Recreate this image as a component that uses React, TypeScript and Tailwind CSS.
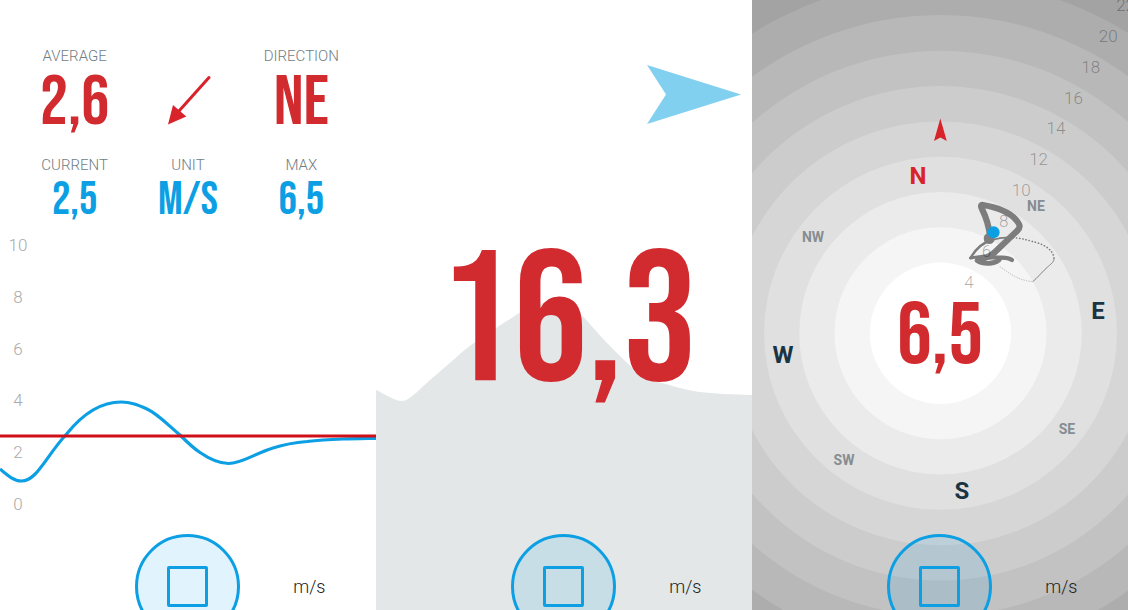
const DISPLAY = "font-['Bebas_Neue','Roboto_Condensed','Liberation_Sans_Narrow','Roboto',sans-serif]";

function Footer() {
  return (
    <footer className="relative grid h-[76px] shrink-0 grid-cols-3 overflow-hidden px-[18px]">
      <button
        type="button"
        aria-label="Stop"
        className="col-start-2 flex size-[105px] items-center justify-center justify-self-center rounded-full border-3 border-[#0c9fe3] bg-[#0c9fe3]/12"
      >
        <span className="size-[41px] rounded-xs border-3 border-[#0c9fe3]" />
      </button>
      <span className="mt-[41px] pl-4 text-center text-lg leading-6 font-light text-[#222]">m/s</span>
    </footer>
  );
}

function Label({ children }: { children: string }) {
  return <dt className="text-[15px] leading-5 font-light text-[#717d82]">{children}</dt>;
}

function Big({ children }: { children: string }) {
  return <dd className={`${DISPLAY} text-[70px] leading-[74px] text-[#d12b2f]`}>{children}</dd>;
}

function Small({ children }: { children: string }) {
  return <dd className={`${DISPLAY} text-[46px] leading-[52px] text-[#0c9fe3]`}>{children}</dd>;
}

function HistoryPanel() {
  return (
    <section className="flex flex-col overflow-hidden bg-white">
      <dl className="grid grid-cols-3 gap-y-[15px] px-[18px] pt-[46px] text-center">
        <div>
          <Label>AVERAGE</Label>
          <Big>2,6</Big>
        </div>
        <div className="flex items-end justify-center pb-[15px]">
          <svg width="46" height="50" viewBox="0 0 46 50" aria-hidden="true">
            <path d="M44 2.500 14 36" stroke="#d8232a" strokeWidth="3" strokeLinecap="round" />
            <path d="M3 49.500 8 30 21.300 41.500Z" fill="#d8232a" />
          </svg>
        </div>
        <div>
          <Label>DIRECTION</Label>
          <Big>NE</Big>
        </div>
        <div>
          <Label>CURRENT</Label>
          <Small>2,5</Small>
        </div>
        <div>
          <Label>UNIT</Label>
          <Small>M/S</Small>
        </div>
        <div>
          <Label>MAX</Label>
          <Small>6,5</Small>
        </div>
      </dl>
      <div className="relative mt-[9px] mb-[21px] flex flex-1 flex-col justify-between">
        {["10", "8", "6", "4", "2", "0"].map((n) => (
          <span key={n} className="w-9 text-center text-[17px] leading-[18px] font-light text-[#aaa]">
            {n}
          </span>
        ))}
        <svg
          className="absolute inset-0 size-full"
          viewBox="0 0 376 277"
          preserveAspectRatio="none"
          fill="none"
          aria-hidden="true"
        >
          <path
            d="M0 233C8 240 14 245 21.500 245C37 245 46 220 67 197.500C82 179 101 166 121 166C131 166 138 169 147 173C158 178 169 190 180 199C187 206 193 212 200 216.500C211 224 219 227.500 228.500 227.500C242 227.500 256 217 273 212C284 208.500 295 206.500 307 205.500C319 204 331 203.400 343 203C354 202.600 365 202.500 376 202.300"
            stroke="#0c9fe3"
            strokeWidth="3.200"
          />
          <path d="M0 200H376" stroke="#d01018" strokeWidth="3.200" />
        </svg>
      </div>
      <Footer />
    </section>
  );
}

function SpeedPanel() {
  return (
    <section className="relative flex flex-col overflow-hidden bg-white">
      <svg
        className="absolute inset-0 size-full"
        viewBox="0 0 376 610"
        preserveAspectRatio="none"
        aria-hidden="true"
      >
        <path
          d="M0 390C9 394 18 401 26 401C34 401 44 388 60 375C72 365 83 354 95 345C110 334 125 325 140 315C152 307 162 303 172 303C184 303 191 302 200 310C211 319 220 332 230 342C242 354 254 367 267 375C276 382 282 382 290 384C300 387 310 390 320 391.500C338 394 357 394.500 376 395V610H0Z"
          fill="#e3e7e8"
        />
      </svg>
      <svg
        className="relative mt-[65px] mr-[11px] shrink-0 self-end"
        width="94"
        height="59"
        viewBox="0 0 94 59"
        aria-hidden="true"
      >
        <path d="M0 0 94 29.500 0 59 19 29.500Z" fill="#82d0f0" />
      </svg>
      <p
        className={`${DISPLAY} relative flex flex-1 items-center justify-center pb-2 pl-2 text-[186px] leading-none text-[#d12b2f]`}
      >
        16,3
      </p>
      <Footer />
    </section>
  );
}

const RINGS = [
  { r: 389.400, fill: "#a3a3a3" },
  { r: 354, fill: "#adadad" },
  { r: 318.300, fill: "#b8b8b8" },
  { r: 282.500, fill: "#c2c2c2" },
  { r: 247.200, fill: "#cccccc" },
  { r: 211.900, fill: "#d6d6d6" },
  { r: 176.500, fill: "#e0e0e0" },
  { r: 141.200, fill: "#ebebeb" },
  { r: 106, fill: "#f5f5f5" },
  { r: 70.700, fill: "#ffffff" },
];

const SCALE = [4, 6, 8, 10, 12, 14, 16, 18, 20, 22];

const MAJOR = [
  { t: "N", x: 166, y: 184, fill: "#d8232a" },
  { t: "E", x: 346, y: 319, fill: "#1b3443" },
  { t: "S", x: 210, y: 499, fill: "#1b3443" },
  { t: "W", x: 31, y: 363, fill: "#1b3443" },
];

const MINOR = [
  { t: "NE", x: 284, y: 211 },
  { t: "SE", x: 315, y: 434 },
  { t: "SW", x: 92, y: 465 },
  { t: "NW", x: 61, y: 242 },
];

function CompassPanel() {
  return (
    <section className="relative flex flex-col overflow-hidden bg-[#999]">
      <svg
        className="absolute inset-0 size-full font-['Roboto',sans-serif]"
        viewBox="0 0 376 610"
        preserveAspectRatio="xMidYMid slice"
        textAnchor="middle"
        role="img"
        aria-label="Wind direction dial"
      >
        {RINGS.map((ring) => (
          <circle key={ring.r} cx="188.500" cy="333.300" r={ring.r} fill={ring.fill} />
        ))}
        <path d="M188.300 118.500 194.800 141 188.400 137.500 182 141Z" fill="#d8232a" />
        <g fill="none" stroke="#7d7d7d" strokeLinecap="round" strokeLinejoin="round">
          <path d="M248 266.700C258 274 268 281 281 281.500" stroke="#aaa" strokeWidth="0.800" strokeDasharray="0.500 2" />
          <path d="M281 281.500C286 277 291 271 296 266.700C300 263 302 262 302 258" strokeWidth="1" strokeDasharray="1.500 0.800" />
          <path d="M302 258C301 248 288 243 281 241.700C273 239 266 238 260 237.500" strokeWidth="1.600" strokeDasharray="0.200 3" />
          <path d="M260 237.500C252 237 246 238 240 240" strokeWidth="1.600" />
          <path d="M240 239.500C230 243 223 250 218.500 258" strokeWidth="2.400" />
          <path d="M218.500 258C222 257 226 257 232 256" strokeWidth="3" />
          <path d="M260 260C255 256.500 250 258 246 257.500C238 257 232 257 226 259.500" strokeWidth="4.200" />
          <path d="M248 258.500C245 264 232 265 225 260.500" strokeWidth="4.800" />
          <path d="M228 259C234 258 239 256 243 252L265 231C269 227 268 225 265 221C259 213 249 208 231 205C228 204.500 229 207 230 209C234 217 237 227 238 236" strokeWidth="6.200" />
        </g>
        <circle cx="237.200" cy="238.500" r="5.500" fill="#7d7d7d" />
        <circle cx="241.600" cy="232.300" r="6" fill="#0c9fe3" />
        <g fontSize="17" fontWeight="300" fill="#000" fillOpacity="0.320">
          {SCALE.map((n, i) => (
            <text key={n} x={217 + i * 17.400} y={288 - i * 30.750}>
              {n}
            </text>
          ))}
        </g>
        <g fontSize="24" fontWeight="700">
          {MAJOR.map((m) => (
            <text key={m.t} x={m.x} y={m.y} fill={m.fill}>
              {m.t}
            </text>
          ))}
        </g>
        <g fontSize="14" fontWeight="700" fill="#858d92">
          {MINOR.map((m) => (
            <text key={m.t} x={m.x} y={m.y}>
              {m.t}
            </text>
          ))}
        </g>
        <text x="188" y="363" fontSize="87" fill="#d12b2f" className={DISPLAY}>
          6,5
        </text>
      </svg>
      <div className="flex-1" />
      <Footer />
    </section>
  );
}

export default function App() {
  return (
    <main className="grid min-h-screen grid-cols-3 font-['Roboto',sans-serif]">
      <HistoryPanel />
      <SpeedPanel />
      <CompassPanel />
    </main>
  );
}
